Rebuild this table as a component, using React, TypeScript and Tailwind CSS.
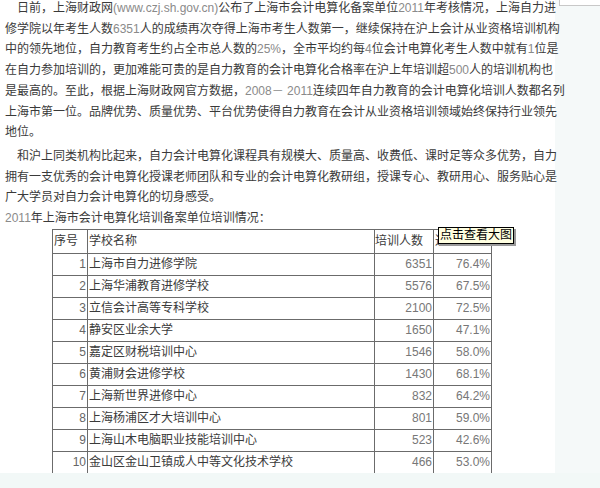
// 2011年上海市会计电算化培训备案单位 - article snapshot

const rows: [number, string, string, string][] = [
  [1, '上海市自力进修学院', '6351', '76.4%'],
  [2, '上海华浦教育进修学校', '5576', '67.5%'],
  [3, '立信会计高等专科学校', '2100', '72.5%'],
  [4, '静安区业余大学', '1650', '47.1%'],
  [5, '嘉定区财税培训中心', '1546', '58.0%'],
  [6, '黄浦财会进修学校', '1430', '68.1%'],
  [7, '上海新世界进修中心', '832', '64.2%'],
  [8, '上海杨浦区才大培训中心', '801', '59.0%'],
  [9, '上海山木电脑职业技能培训中心', '523', '42.6%'],
  [10, '金山区金山卫镇成人中等文化技术学校', '466', '53.0%'],
  [11, '闵行区财经进修学校', '434', '55.8%'],
];

function N({ children }: { children: React.ReactNode }) {
  return <span className="text-[#8a8a8a]">{children}</span>;
}

export default function App() {
  return (
    <div className="w-[600px] h-[488px] flex flex-col bg-white overflow-hidden font-['Liberation_Sans','Noto_Sans_CJK_SC',sans-serif] text-[12px] text-[#3a3a3a]">
      <div className="flex h-[473px] overflow-hidden">
        {/* article */}
        <div className="relative w-[555px] pl-[5px] pt-0 -mt-[2px]">
          <div className="leading-[20.7px] whitespace-nowrap">
            <div className="pl-[12px]">
              日前，上海财政网<N>(www.czj.sh.gov.cn)</N>公布了上海市会计电算化备案单位<N>2011</N>年考核情况，上海自力进
            </div>
            <div>修学院以年考生人数<N>6351</N>人的成绩再次夺得上海市考生人数第一，继续保持在沪上会计从业资格培训机构</div>
            <div>中的领先地位，自力教育考生约占全市总人数的<N>25%</N>，全市平均约每<N>4</N>位会计电算化考生人数中就有<N>1</N>位是</div>
            <div>在自力参加培训的，更加难能可贵的是自力教育的会计电算化合格率在沪上年培训超<N>500</N>人的培训机构也</div>
            <div>是最高的。至此，根据上海财政网官方数据，<N>2008－ 2011</N>连续四年自力教育的会计电算化培训人数都名列</div>
            <div>上海市第一位。品牌优势、质量优势、平台优势使得自力教育在会计从业资格培训领域始终保持行业领先</div>
            <div>地位。</div>
          </div>
          <div className="mt-[3px] leading-[20.7px] whitespace-nowrap">
            <div className="pl-[12px]">和沪上同类机构比起来，自力会计电算化课程具有规模大、质量高、收费低、课时足等众多优势，自力</div>
            <div>拥有一支优秀的会计电算化授课老师团队和专业的会计电算化教研组，授课专心、教研用心、服务贴心是</div>
            <div>广大学员对自力会计电算化的切身感受。</div>
            <div><N>2011</N>年上海市会计电算化培训备案单位培训情况：</div>
          </div>

          <table className="ml-[47px] table-fixed border-collapse whitespace-nowrap">
            <colgroup>
              <col className="w-[35px]" />
              <col className="w-[287px]" />
              <col className="w-[59px]" />
              <col className="w-[58px]" />
            </colgroup>
            <thead>
              <tr className="h-[24px]">
                <td className="border border-[#6b6b6b] px-px text-left">序号</td>
                <td className="border border-[#6b6b6b] px-px text-left">学校名称</td>
                <td className="border border-[#6b6b6b] px-0 text-left">培训人数</td>
                <td className="border border-[#6b6b6b] px-px text-left">通过率</td>
              </tr>
            </thead>
            <tbody>
              {rows.map(([no, name, count, rate]) => (
                <tr key={no} className="h-[22px]">
                  <td className="border border-[#6b6b6b] px-px text-right text-[#666]">{no}</td>
                  <td className="border border-[#6b6b6b] px-px text-left">{name}</td>
                  <td className="border border-[#6b6b6b] px-px text-right text-[#777]">{count}</td>
                  <td className="border border-[#6b6b6b] px-px text-right text-[#777]">{rate}</td>
                </tr>
              ))}
            </tbody>
          </table>

          {/* image tooltip */}
          <div className="absolute left-[438px] top-[229px] px-px h-[17px] leading-[15px] border border-black bg-[#ffffe1] text-[12px] text-black shadow-[2px_2px_0_#9a9a9a]">
            点击查看大图
          </div>
        </div>

        {/* right rail */}
        <div className="flex-1 bg-[#f5f9f9]">
          <div className="ml-[4px] h-[6px] bg-white border-l border-b border-[#c8c8c8]" />
        </div>
      </div>
      <div className="h-[15px] bg-[#f2f8f7]" />
    </div>
  );
}
